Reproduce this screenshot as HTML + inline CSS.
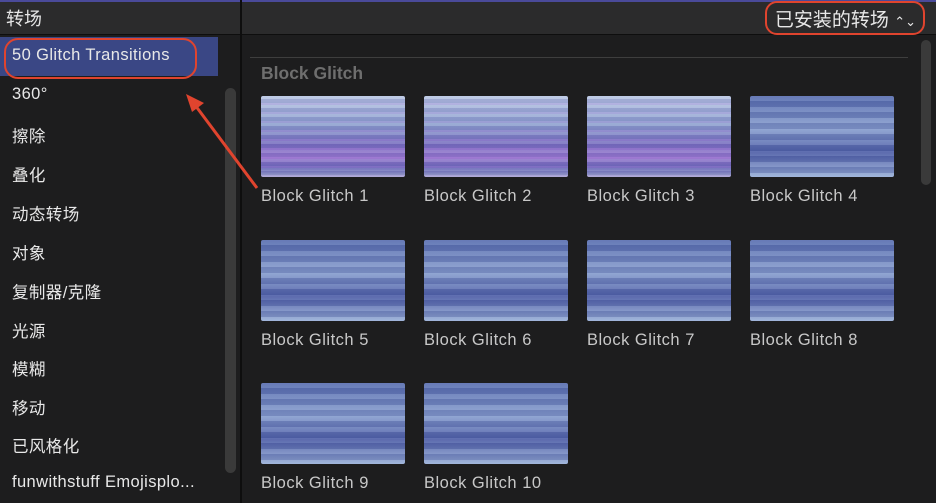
<!DOCTYPE html>
<html><head><meta charset="utf-8"><style>
*{margin:0;padding:0;box-sizing:border-box}
body{width:936px;height:503px;overflow:hidden;background:#1d1d1e;font-family:"Liberation Sans","Noto Sans CJK SC",sans-serif;position:relative;color:#ddd}
.top{position:absolute;left:0;top:0;width:936px;height:35px;background:#2b2b2c;border-top:2px solid #4a4a9a;border-bottom:1px solid #0e0e0e}
.vdiv{position:absolute;left:240px;top:0;width:2px;height:503px;background:#0e0e0e}
.title{position:absolute;left:6px;top:5px;font-size:18px;color:#e6e6e6}
.sel{position:absolute;left:0;top:37px;width:218px;height:39px;background:#3a4785}
.item{position:absolute;left:12px;font-size:16.5px;letter-spacing:0.4px;color:#e8e8e8}
.sb{position:absolute;left:225px;top:88px;width:11px;height:385px;border-radius:6px;background:#3a3a3a}
.sb2{position:absolute;left:921px;top:40px;width:10px;height:145px;border-radius:5px;background:#3a3a3a}
.line{position:absolute;left:250px;top:57px;width:658px;height:1px;background:#3e3e3e}
.hd{position:absolute;left:261px;top:63px;font-size:17.5px;font-weight:bold;color:#6e6e6e}
.th{position:absolute;width:144px;height:81px;border-radius:2px;
background:
repeating-linear-gradient(180deg,rgba(255,255,255,.1) 0 3px,rgba(60,50,140,.15) 3px 7px,rgba(200,120,230,.15) 7px 9px),
linear-gradient(180deg,#b9c6e4 0%,#8fa2d0 35%,#7a6fc0 60%,#9a7ad0 75%,#6a6ab8 90%,#b0b8d8 100%)}
.th.b{background:
repeating-linear-gradient(180deg,rgba(255,255,255,.08) 0 5px,rgba(40,50,120,.2) 5px 11px),
linear-gradient(180deg,#5a6fb0 0%,#8aa0d0 40%,#5060a8 70%,#9ab0d8 100%)}
.lb{position:absolute;font-size:16.5px;letter-spacing:0.5px;color:#c8c8c8}
.red{position:absolute;border:2.5px solid #e0442e;border-radius:12px}
</style></head><body>
<div class="top"></div>
<div class="vdiv"></div>
<div class="title">转场</div>
<div style="position:absolute;right:20px;top:5px;font-size:19px;color:#e8e8e8">已安装的转场 <span style="font-size:13px">⌃⌄</span></div>
<div class="sel"></div>
<div class="item" style="top:46px">50 Glitch Transitions</div>
<div class="item" style="top:85px">360°</div>
<div class="item" style="top:123px">擦除</div>
<div class="item" style="top:162px">叠化</div>
<div class="item" style="top:201px">动态转场</div>
<div class="item" style="top:240px">对象</div>
<div class="item" style="top:279px">复制器/克隆</div>
<div class="item" style="top:318px">光源</div>
<div class="item" style="top:356px">模糊</div>
<div class="item" style="top:395px">移动</div>
<div class="item" style="top:433px">已风格化</div>
<div class="item" style="top:473px">funwithstuff Emojisplo...</div>
<div class="sb"></div>
<div class="sb2"></div>
<div class="line"></div>
<div class="hd">Block Glitch</div>
<div class="th" style="left:261px;top:96px"></div>
<div class="th" style="left:424px;top:96px"></div>
<div class="th" style="left:587px;top:96px"></div>
<div class="th b" style="left:750px;top:96px"></div>
<div class="th b" style="left:261px;top:240px"></div>
<div class="th b" style="left:424px;top:240px"></div>
<div class="th b" style="left:587px;top:240px"></div>
<div class="th b" style="left:750px;top:240px"></div>
<div class="th b" style="left:261px;top:383px"></div>
<div class="th b" style="left:424px;top:383px"></div>
<div class="lb" style="left:261px;top:187px">Block Glitch 1</div>
<div class="lb" style="left:424px;top:187px">Block Glitch 2</div>
<div class="lb" style="left:587px;top:187px">Block Glitch 3</div>
<div class="lb" style="left:750px;top:187px">Block Glitch 4</div>
<div class="lb" style="left:261px;top:331px">Block Glitch 5</div>
<div class="lb" style="left:424px;top:331px">Block Glitch 6</div>
<div class="lb" style="left:587px;top:331px">Block Glitch 7</div>
<div class="lb" style="left:750px;top:331px">Block Glitch 8</div>
<div class="lb" style="left:261px;top:474px">Block Glitch 9</div>
<div class="lb" style="left:424px;top:474px">Block Glitch 10</div>
<div class="red" style="left:4px;top:38px;width:193px;height:41px;border-radius:14px"></div>
<div class="red" style="left:765px;top:1px;width:160px;height:34px;border-radius:12px"></div>
<svg style="position:absolute;left:0;top:0" width="936" height="503">
<line x1="257" y1="188" x2="195" y2="105" stroke="#e0442e" stroke-width="3"/>
<polygon points="186,94 204,103 192,112" fill="#e0442e"/>
</svg>
</body></html>
